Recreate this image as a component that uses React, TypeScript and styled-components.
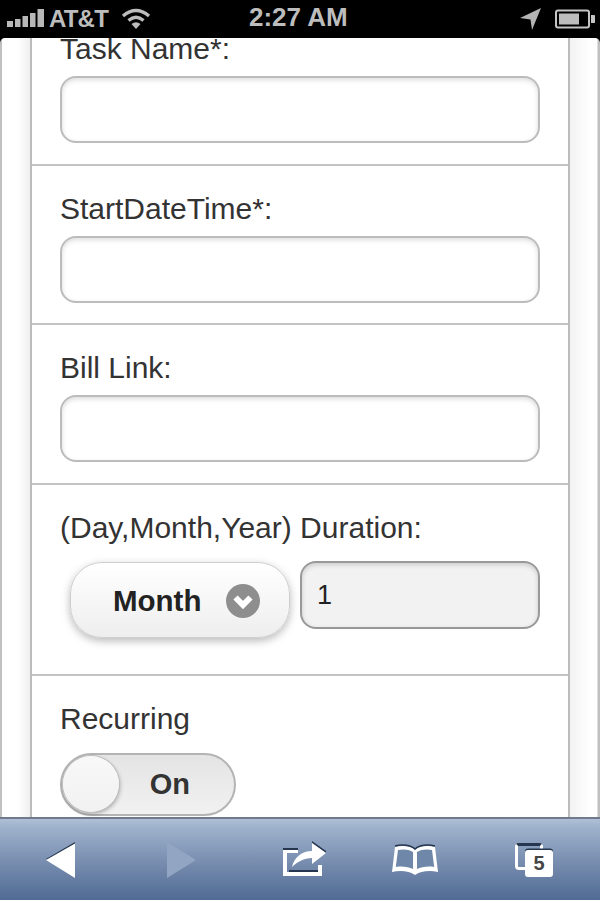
import styled, { createGlobalStyle } from "styled-components";

const GlobalStyle = createGlobalStyle`
  html, body {
    margin: 0;
    padding: 0;
    background: #000000;
  }
  * {
    box-sizing: border-box;
  }
`;

const fields = ["Task Name*:", "StartDateTime*:", "Bill Link:"];

export default function App() {
  return (
    <Phone>
      <GlobalStyle />
      <StatusBar>
        <StatusLeft>
          <svg width="37" height="20" viewBox="0 0 37 20">
            <rect x="0" y="12" width="6" height="6" fill="#b8b8b8" />
            <rect x="8" y="10" width="5.500" height="8" fill="#b8b8b8" />
            <rect x="15.500" y="7" width="5.500" height="11" fill="#b8b8b8" />
            <rect x="23" y="4" width="5.500" height="14" fill="#b8b8b8" />
            <rect x="30.500" y="0" width="6.500" height="18" fill="#b8b8b8" />
          </svg>
          <Carrier>AT&amp;T</Carrier>
          <svg width="30" height="22" viewBox="0 0 30 22">
            <path d="M2 8 Q15 -3 28 8" fill="none" stroke="#bdbdbd" strokeWidth="3.400" />
            <path d="M7.500 12.500 Q15 6 22.500 12.500" fill="none" stroke="#bdbdbd" strokeWidth="3.400" />
            <path d="M15 21 L10.500 16 Q15 12.500 19.500 16 Z" fill="#bdbdbd" />
          </svg>
        </StatusLeft>
        <Clock>2:27 AM</Clock>
        <StatusRight>
          <svg width="22" height="22" viewBox="0 0 22 22">
            <path d="M21 0 L12 22 L10.500 11.500 L0 10 Z" fill="#b4b4b4" />
          </svg>
          <svg width="40" height="20" viewBox="0 0 40 20">
            <rect x="1" y="1.500" width="33" height="17" rx="2" fill="none" stroke="#c4c4c4" strokeWidth="2" />
            <rect x="4" y="4.500" width="20" height="11" fill="#bdbdbd" />
            <path d="M36 6 h2 a2 2 0 0 1 0 8 h-2 z" fill="#c4c4c4" />
          </svg>
        </StatusRight>
      </StatusBar>
      <Viewport>
        <Card>
          {fields.map((label) => (
            <Row key={label}>
              <Label>{label}</Label>
              <TextBox />
            </Row>
          ))}
          <DurationRow>
            <Label>(Day,Month,Year) Duration:</Label>
            <DurationControls>
              <SelectButton>
                <SelectText>Month</SelectText>
                <Chevron>
                  <svg width="34" height="34" viewBox="0 0 34 34">
                    <circle cx="17" cy="17" r="17" fill="#8e8e8e" />
                    <path d="M9.500 13.500 L17 21 L24.500 13.500" fill="none" stroke="#ffffff" strokeWidth="6" />
                  </svg>
                </Chevron>
              </SelectButton>
              <NumberBox>1</NumberBox>
            </DurationControls>
          </DurationRow>
          <ToggleRow>
            <Label>Recurring</Label>
            <Toggle>
              <Knob />
              <ToggleText>On</ToggleText>
            </Toggle>
          </ToggleRow>
        </Card>
      </Viewport>
      <Toolbar>
        <ToolSlot $left={46}>
          <svg width="30" height="36" viewBox="0 0 30 36">
            <path d="M29 0 L0 17 L29 35 Z" fill="#26364f" />
            <path d="M29 1.500 L0 18 L29 36 Z" fill="#ffffff" />
          </svg>
        </ToolSlot>
        <ToolSlot $left={90}>
          <svg width="30" height="36" viewBox="0 0 30 36">
            <path d="M1 0 L30 18 L1 36 Z" fill="#92a5c2" />
          </svg>
        </ToolSlot>
        <ToolSlot $left={87}>
          <svg width="44" height="38" viewBox="0 0 44 38">
            <path d="M0 7 H15 V9 H0 Z" fill="#26364f" />
            <path d="M0 9 H15 V12 H4 V31 H35 V24 H39 V35 H0 Z" fill="#ffffff" />
            <path d="M6 29 H35 V31 H6 Z" fill="#26364f" />
            <path d="M29 0 L43 10 V12 L29 2 Z" fill="#26364f" />
            <path d="M29 2 L43 12 L29 23 V17 C21 17 14 21 9 26 C11 17 18 10 29 10 Z" fill="#ffffff" />
          </svg>
        </ToolSlot>
        <ToolSlot $left={65}>
          <svg width="46" height="32" viewBox="0 0 46 32">
            <path d="M23 6 C19 2 10 1 3 3 L0 28 C8 26 18 27 23 31 C28 27 38 26 46 28 L43 3 C36 1 27 2 23 6 Z" fill="#ffffff" />
            <path d="M21 8 C17 5 10 5 6 6 L3.800 23 C10 22 17 23 21 25 Z" fill="#6f87a9" />
            <path d="M25 8 C29 5 36 5 40 6 L42.200 23 C36 22 29 23 25 25 Z" fill="#6f87a9" />
            <path d="M3 2 C10 0 19 1 23 5 C27 1 36 0 43 2" fill="none" stroke="#26364f" strokeWidth="1.400" />
          </svg>
        </ToolSlot>
        <ToolSlot $left={77}>
          <Tabs>
            <TabsBack />
            <TabsFront>5</TabsFront>
          </Tabs>
        </ToolSlot>
      </Toolbar>
    </Phone>
  );
}

const Phone = styled.div`
  width: 600px;
  height: 900px;
  display: flex;
  flex-direction: column;
  overflow: hidden;
  background: #000000;
  font-family: "Liberation Sans", Arial, sans-serif;
`;

const StatusBar = styled.div`
  height: 38px;
  flex: none;
  position: relative;
  display: flex;
  align-items: center;
  justify-content: space-between;
  padding: 0 5px 0 7px;
  background: #000000;
  color: #bdbdbd;
`;

const StatusLeft = styled.div`
  display: flex;
  align-items: center;
  gap: 5px;
  svg:last-child {
    margin-left: 8px;
  }
`;

const Carrier = styled.span`
  font-size: 24px;
  font-weight: 700;
  letter-spacing: -0.800px;
`;

const Clock = styled.span`
  position: absolute;
  left: 249px;
  top: 1px;
  font-size: 26px;
  font-weight: 700;
  line-height: 32px;
`;

const StatusRight = styled.div`
  display: flex;
  align-items: center;
  gap: 13px;
`;

const Viewport = styled.div`
  flex: 1;
  min-height: 0;
  overflow: hidden;
  padding: 0 1px 0 2px;
  background: linear-gradient(90deg, #c0c0c0 0, #c0c0c0 2px, #ffffff 2px, #ffffff 18px, #efefef 30px, #ffffff 30px, #ffffff 569px, #f2f2f2 570px, #ffffff 590px, #ffffff 597px, #c0c0c0 598px);
  border-radius: 5px 5px 0 0;
`;

const Card = styled.div`
  margin: -32px 29px 0 28px;
  border-left: 2px solid #bcbcbc;
  border-right: 2px solid #bcbcbc;
  background: #ffffff;
`;

const Row = styled.div`
  padding: 23px 28px 21px 28px;
  border-bottom: 2px solid #c4c4c4;
  height: 159.500px;
`;

const DurationRow = styled(Row)`
  height: 191px;
`;

const ToggleRow = styled(Row)`
  border-bottom: none;
  height: auto;
`;

const Label = styled.div`
  font-size: 30px;
  line-height: 40px;
  color: #333333;
  margin-bottom: 7px;
  white-space: nowrap;
`;

const TextBox = styled.div`
  height: 67px;
  border: 2px solid #bcbcbc;
  border-radius: 16px;
  background: #ffffff;
  box-shadow: inset 0 2px 5px rgba(0, 0, 0, 0.14);
`;

const DurationControls = styled.div`
  display: flex;
  align-items: flex-start;
  gap: 10px;
  margin-top: 13px;
  padding-left: 10px;
`;

const SelectButton = styled.div`
  width: 220px;
  height: 76px;
  margin-top: 1px;
  display: flex;
  align-items: center;
  justify-content: space-between;
  padding: 2px 29px 0 42px;
  border: 1px solid #cfcfcf;
  border-radius: 32px;
  background: linear-gradient(#ffffff, #eeeeee);
  box-shadow: 0 3px 8px rgba(0, 0, 0, 0.28);
`;

const SelectText = styled.span`
  font-size: 29.500px;
  font-weight: 700;
  color: #222222;
`;

const Chevron = styled.span`
  display: flex;
`;

const NumberBox = styled.div`
  flex: 1;
  height: 68px;
  padding: 16px 15px;
  border: 2px solid #999999;
  border-radius: 16px;
  background: #f2f2f2;
  box-shadow: inset 0 2px 5px rgba(0, 0, 0, 0.16);
  font-size: 27px;
  line-height: 32px;
  color: #222222;
`;

const Toggle = styled.div`
  position: relative;
  width: 176px;
  height: 63px;
  margin-top: 14px;
  display: flex;
  align-items: center;
  justify-content: flex-end;
  padding-right: 44px;
  border: 2px solid #b4b4b4;
  border-radius: 32px;
  background: linear-gradient(#e4e4e4, #f1f1f1);
`;

const Knob = styled.span`
  position: absolute;
  left: 1px;
  top: 1.500px;
  width: 56px;
  height: 56px;
  border-radius: 50%;
  background: linear-gradient(#f8f8f8, #f1f1f1);
  box-shadow: 0 0 0 1px #bdbdbd, 1px 2px 4px rgba(0, 0, 0, 0.3);
`;

const ToggleText = styled.span`
  font-size: 29px;
  font-weight: 700;
  color: #333333;
`;

const Toolbar = styled.div`
  height: 83px;
  flex: none;
  display: flex;
  align-items: center;
  background: linear-gradient(#aebfd6 0, #9db0cb 12%, #7288ab 60%, #506b94 100%);
  border-top: 2px solid #6f7a8a;
`;

const ToolSlot = styled.div<{ $left: number }>`
  display: flex;
  margin-left: ${(props) => props.$left}px;
`;

const Tabs = styled.div`
  position: relative;
  width: 38px;
  height: 34px;
`;

const TabsBack = styled.div`
  position: absolute;
  left: 0;
  top: 0;
  width: 28px;
  height: 27px;
  border: 3px solid #ffffff;
  border-top-color: #26364f;
  border-radius: 4px;
`;

const TabsFront = styled.div`
  position: absolute;
  left: 10px;
  top: 7px;
  width: 28px;
  height: 27px;
  border-radius: 3px;
  background: #ffffff;
  box-shadow: 0 -1.500px 0 #26364f;
  color: #444444;
  font-size: 20px;
  font-weight: 700;
  line-height: 27px;
  text-align: center;
`;
